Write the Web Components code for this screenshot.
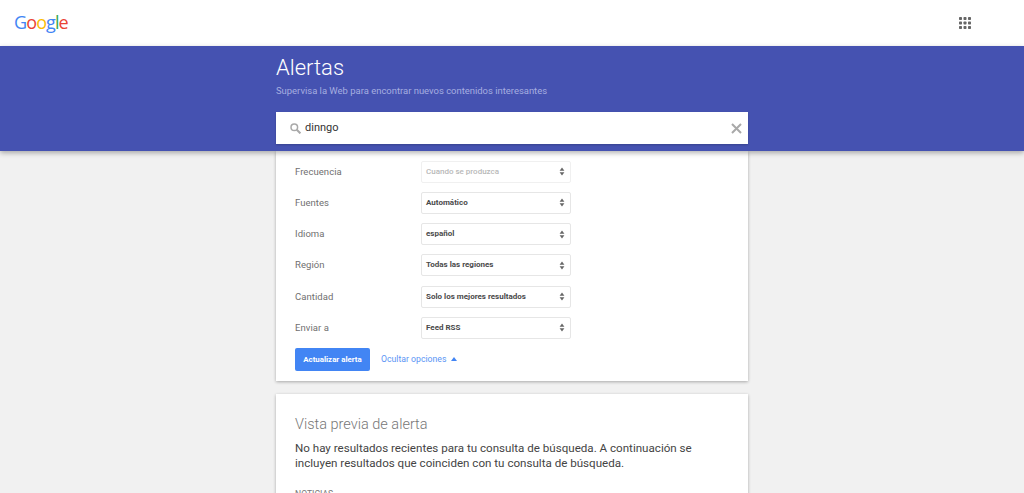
<!DOCTYPE html>
<html lang="es">
<head>
<meta charset="utf-8">
<title>Alertas</title>
<style>
  html, body { margin: 0; height: 493px; overflow: hidden; background: #f1f1f1; font-family: Roboto, "Liberation Sans", sans-serif; }
</style>
</head>
<body>
<alerts-page></alerts-page>
<script>
(function () {
    'use strict';

    class TopBar extends HTMLElement {
        constructor() {
            super();
            const cells = [];
            for (let y = 0; y < 3; y++) {
                for (let x = 0; x < 3; x++) {
                    cells.push(`<rect x="${x * 4.5}" y="${y * 4.5}" width="3" height="3" rx=".7"/>`);
                }
            }
            this.attachShadow({ mode: 'open' }).innerHTML = `
            <style>
              :host { display: flex; align-items: center; justify-content: space-between; height: 46px; background: #fff; padding: 0 53px 0 14px; }
              .logo { font: 500 18px/24px "Open Sans", sans-serif; letter-spacing: -0.9px; position: relative; top: -1px; }
              .b { color: #4285f4; } .r { color: #ea4335; } .y { color: #fbbc05; } .g { color: #34a853; }
              svg { display: block; width: 12px; height: 12px; fill: #666; }
            </style>
            <div class="logo"><span class="b">G</span><span class="r">o</span><span class="y">o</span><span class="b">g</span><span class="g">l</span><span class="r">e</span></div>
            <svg viewBox="0 0 12 12">${cells.join('')}</svg>`;
        }
    }

    class HeroBand extends HTMLElement {
        constructor() {
            super();
            this.attachShadow({ mode: 'open' }).innerHTML = `
            <style>
              :host { display: block; position: relative; z-index: 2; height: 105px; background: #4552b1; box-shadow: 0 2px 5px rgba(0,0,0,.3); }
              .inner { width: 472px; margin: 0 auto; }
              h1 { margin: 0; padding-top: 8px; font: 300 22px/28px Roboto, sans-serif; color: #fff; }
              p { margin: 0; padding-top: 1px; font: 400 9.45px/16px Roboto, sans-serif; color: #a6aee0; }
              .search { display: flex; align-items: center; height: 32px; margin-top: 13px; background: #fff; padding: 0 6px 0 14px; box-sizing: border-box; box-shadow: 0 1px 2px rgba(0,0,0,.2); }
              .search svg { display: block; flex: none; }
              .q { flex: 1; margin-left: 4px; font: 400 11px/32px Roboto, sans-serif; color: #333; }
            </style>
            <div class="inner">
              <h1>Alertas</h1>
              <p>Supervisa la Web para encontrar nuevos contenidos interesantes</p>
              <div class="search">
                <svg width="11" height="11" viewBox="0 0 11 11" fill="none" stroke="#a9a9a9" stroke-width="1.5"><circle cx="4.3" cy="4.3" r="3.3"/><path d="M6.8 6.8L10.4 10.4" stroke-width="2"/></svg>
                <span class="q">dinngo</span>
                <svg width="11" height="11" viewBox="0 0 11 11" fill="none" stroke="#a9a9a9" stroke-width="2"><path d="M1 1L10 10M10 1L1 10"/></svg>
              </div>
            </div>`;
        }
    }

    class OptionRow extends HTMLElement {
        constructor() {
            super();
            this.attachShadow({ mode: 'open' }).innerHTML = `
            <style>
              :host { display: flex; align-items: center; height: 22px; }
              .label { width: 126px; font: 400 9.5px/22px Roboto, sans-serif; color: #707070; letter-spacing: 0.05px; }
              .select { display: flex; align-items: center; justify-content: space-between; box-sizing: border-box; width: 150px; height: 22px; padding: 0 5px 0 4px; background: #fff; border: 1px solid #e6e6e6; border-radius: 2px; font: 700 8px/20px Roboto, sans-serif; color: #4a4a4a; }
              :host([disabled]) .select { color: #b8b8b8; font-weight: 500; border-color: #f0f0f0; }
              svg { display: block; width: 6px; height: 9px; fill: #666; }
            </style>
            <span class="label"></span>
            <div class="select"><span class="value"></span><svg viewBox="0 0 6 9"><path d="M3 .4L5.4 3.7H.6zM3 8.6L.6 5.3H5.4z"/></svg></div>`;
            this.shadowRoot.querySelector('.label').textContent = this.getAttribute('label');
            this.shadowRoot.querySelector('.value').textContent = this.getAttribute('value');
        }
    }

    class OptionsCard extends HTMLElement {
        constructor() {
            super();
            this.attachShadow({ mode: 'open' }).innerHTML = `
            <style>
              :host { display: flex; flex-direction: column; gap: 9.2px; width: 472px; height: 230px; box-sizing: border-box; margin: 0 auto; padding: 9.8px 19px 0; background: #fff; box-shadow: 0 1px 3px rgba(0,0,0,.3); }
              .actions { display: flex; align-items: center; margin-top: 0; }
              button { width: 75px; height: 23px; padding: 0; border: 0; border-radius: 2px; background: #4285f4; color: #fff; font: 700 7.9px/23px Roboto, sans-serif; }
              .toggle { margin-left: 11px; font: 400 8.7px/23px Roboto, sans-serif; color: #5b95f5; }
              .arrow { width: 0; height: 0; margin-left: 5px; border: 3.5px solid transparent; border-top: 0; border-bottom: 4px solid #4285f4; }
            </style>
            <slot></slot>
            <div class="actions"><button>Actualizar alerta</button><span class="toggle">Ocultar opciones</span><span class="arrow"></span></div>`;
        }
    }

    class PreviewCard extends HTMLElement {
        constructor() {
            super();
            this.attachShadow({ mode: 'open' }).innerHTML = `
            <style>
              :host { display: block; width: 472px; height: 120px; box-sizing: border-box; margin: 13px auto 0; padding: 20px 19px 0; background: #fff; box-shadow: 0 1px 3px rgba(0,0,0,.3); overflow: hidden; }
              h2 { margin: 0; font: 300 14.5px/22px Roboto, sans-serif; color: #777; }
              p { margin: 5px 0 0; font: 400 11.6px/15px Roboto, sans-serif; color: #444; }
              .section { margin-top: 17px; font: 400 8.6px/12px Roboto, sans-serif; color: #777; }
            </style>
            <h2>Vista previa de alerta</h2>
            <p>No hay resultados recientes para tu consulta de búsqueda. A continuación se incluyen resultados que coinciden con tu consulta de búsqueda.</p>
            <div class="section">NOTICIAS</div>`;
        }
    }

    class AlertsPage extends HTMLElement {
        constructor() {
            super();
            this.attachShadow({ mode: 'open' }).innerHTML = `
            <style>
              :host { display: block; }
            </style>
            <top-bar></top-bar>
            <hero-band></hero-band>
            <options-card>
              <option-row label="Frecuencia" value="Cuando se produzca" disabled></option-row>
              <option-row label="Fuentes" value="Automático"></option-row>
              <option-row label="Idioma" value="español"></option-row>
              <option-row label="Región" value="Todas las regiones"></option-row>
              <option-row label="Cantidad" value="Solo los mejores resultados"></option-row>
              <option-row label="Enviar a" value="Feed RSS"></option-row>
            </options-card>
            <preview-card></preview-card>`;
        }
    }

    customElements.define('top-bar', TopBar);
    customElements.define('hero-band', HeroBand);
    customElements.define('option-row', OptionRow);
    customElements.define('options-card', OptionsCard);
    customElements.define('preview-card', PreviewCard);
    customElements.define('alerts-page', AlertsPage);
})();
</script>
</body>
</html>
